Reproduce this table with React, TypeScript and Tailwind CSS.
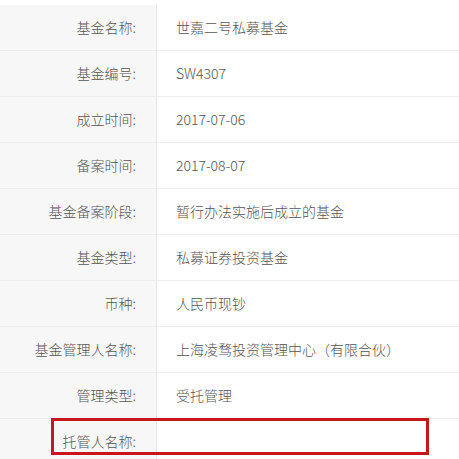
import React from "react";

const rows: [string, string][] = [
  ["基金名称:", "世嘉二号私募基金"],
  ["基金编号:", "SW4307"],
  ["成立时间:", "2017-07-06"],
  ["备案时间:", "2017-08-07"],
  ["基金备案阶段:", "暂行办法实施后成立的基金"],
  ["基金类型:", "私募证券投资基金"],
  ["币种:", "人民币现钞"],
  ["基金管理人名称:", "上海凌骛投资管理中心（有限合伙）"],
  ["管理类型:", "受托管理"],
  ["托管人名称:", ""],
];

export default function App() {
  return (
    <div
      className="w-[459px] h-[459px] overflow-hidden bg-white text-[14px] font-light text-[#555555]"
      style={{ fontFamily: '"Noto Sans CJK SC", "Noto Sans", sans-serif' }}
    >
      <div className="flex flex-col pt-[5px]">
        {rows.map(([k, v], i) => (
          <div key={i} className="relative flex h-[46px] border-b border-[#ededed]">
            <div className="w-[157px] shrink-0 bg-[#f7f7f7] border-r border-[#e6e6e6] flex items-center justify-end pr-[20px]">
              {k}
            </div>
            <div className="flex-1 flex items-center pl-[19px]">{v}</div>
            {i === rows.length - 1 && (
              <div className="absolute left-[51px] top-[-1px] w-[378px] h-[37px] border-[3px] border-[#c9151e]" />
            )}
          </div>
        ))}
      </div>
    </div>
  );
}
